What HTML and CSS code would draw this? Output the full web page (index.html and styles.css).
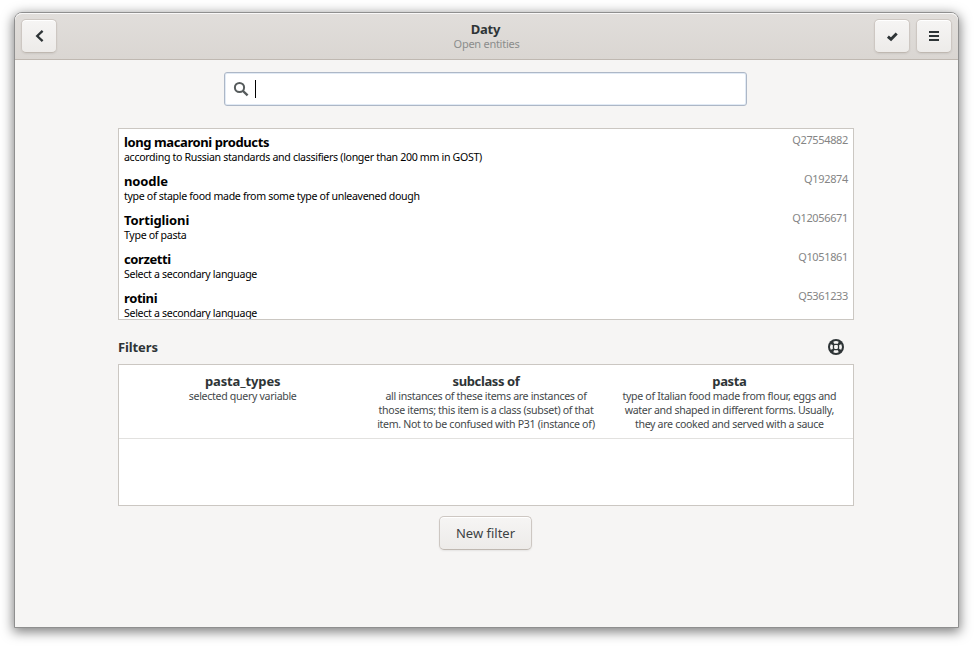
FILE: index.html
```html
<!DOCTYPE html>
<html lang="en">
<head>
<meta charset="utf-8">
<title>Daty</title>
<link rel="stylesheet" href="styles.css">
</head>
<body>
<div class="window">
  <header class="headerbar">
    <button class="button icon-button" aria-label="Back">
      <svg width="16" height="16" viewBox="0 0 16 16"><path d="M11.6 2.8 6.2 8l5.4 5.2" fill="none" stroke="currentColor" stroke-width="2.3"/></svg>
    </button>
    <div class="titles">
      <h1 class="title">Daty</h1>
      <p class="subtitle">Open entities</p>
    </div>
    <div class="actions">
      <button class="button icon-button" aria-label="Confirm">
        <svg width="16" height="16" viewBox="0 0 16 16"><path d="M3.9 8.6 7 11.3 12.7 5.4" fill="none" stroke="currentColor" stroke-width="2.9"/></svg>
      </button>
      <button class="button icon-button" aria-label="Menu">
        <svg width="16" height="16" viewBox="0 0 16 16"><path d="M3 3h10v2H3zM3 7h10v2H3zM3 11h10v2H3z" fill="currentColor"/></svg>
      </button>
    </div>
  </header>
  <main class="content">
    <div class="search">
      <svg class="search-icon" width="16" height="16" viewBox="0 0 16 16"><circle cx="6.5" cy="6.5" r="4.6" fill="none" stroke="currentColor" stroke-width="2"/><path d="m10 10 4.6 4.4" stroke="currentColor" stroke-width="2.4"/></svg>
      <span class="caret"></span>
    </div>
    <ul class="results">
      <li class="result"><div><h2 class="name tight">long macaroni products</h2><p class="description">according to Russian standards and classifiers (longer than 200 mm in GOST)</p></div><span class="entity-id">Q27554882</span></li>
      <li class="result"><div><h2 class="name">noodle</h2><p class="description">type of staple food made from some type of unleavened dough</p></div><span class="entity-id">Q192874</span></li>
      <li class="result"><div><h2 class="name">Tortiglioni</h2><p class="description">Type of pasta</p></div><span class="entity-id">Q12056671</span></li>
      <li class="result"><div><h2 class="name tight">corzetti</h2><p class="description">Select a secondary language</p></div><span class="entity-id">Q1051861</span></li>
      <li class="result"><div><h2 class="name tight">rotini</h2><p class="description">Select a secondary language</p></div><span class="entity-id">Q5361233</span></li>
    </ul>
    <div class="filters-heading">
      <h2 class="name">Filters</h2>
      <svg width="16" height="16" viewBox="0 0 16 16"><circle cx="8" cy="8" r="8" fill="currentColor"/><g class="buoy-gaps"><rect x="6.1" y="6.1" width="3.8" height="3.8" rx="0.8"/><path d="M5.3 2.7Q8 1.3 10.7 2.7L9.9 4.8H6.1zM5.3 13.3Q8 14.7 10.7 13.3L9.9 11.2H6.1zM2.7 5.3Q1.3 8 2.7 10.7L4.8 9.9V6.1zM13.3 5.3Q14.7 8 13.3 10.7L11.2 9.9V6.1z"/></g></svg>
    </div>
    <div class="filters">
      <div class="filter">
        <div class="term"><h3 class="name">pasta_types</h3><p class="description">selected query variable</p></div>
        <div class="term"><h3 class="name tight">subclass of</h3><p class="description">all instances of these items are instances of<br>those items; this item is a class (subset) of that<br>item. Not to be confused with P31 (instance of)</p></div>
        <div class="term"><h3 class="name tight">pasta</h3><p class="description">type of Italian food made from flour, eggs and<br>water and shaped in different forms. Usually,<br>they are cooked and served with a sauce</p></div>
      </div>
    </div>
    <button class="button new-filter">New filter</button>
  </main>
</div>
</body>
</html>
```
FILE: styles.css
```css
* { box-sizing: border-box; }

body {
  margin: 0;
  height: 649px;
  padding: 12px 15px 21px 14px;
  overflow: hidden;
  background: #fff;
  color: #2e3436;
  font-family: "Noto Sans", "Open Sans", sans-serif;
  font-size: 13px;
}

h1, h2, h3, p, ul { margin: 0; padding: 0; }

svg { display: block; flex: none; }

.window {
  display: flex;
  flex-direction: column;
  height: 616px;
  border: 1px solid #8f8f8f;
  border-radius: 8px 8px 0 0;
  background: #f6f5f4;
  box-shadow: 0 3px 12px 1px rgba(0, 0, 0, 0.5);
}

.headerbar {
  display: grid;
  grid-template-columns: 1fr auto 1fr;
  height: 47px;
  padding: 6px 6px 0 6px;
  border-bottom: 1px solid #bfb8b1;
  border-radius: 7px 7px 0 0;
  background: linear-gradient(to top, #dad6d2, #e1dedb);
  box-shadow: inset 0 1px #f9f8f8;
}

.button {
  display: flex;
  align-items: center;
  justify-content: center;
  height: 34px;
  padding: 0;
  border: 1px solid #cdc7c2;
  border-bottom-color: #bfb8b1;
  border-radius: 5px;
  background: linear-gradient(to top, #edebe9, #f6f5f4);
  box-shadow: inset 0 1px #fff, 0 1px 2px rgba(0, 0, 0, 0.07);
  color: #2e3436;
  font: inherit;
}

.icon-button { width: 36px; }

.titles { text-align: center; }

.title {
  margin: 2px 2px 0 0;
  font-size: 13px;
  letter-spacing: -0.2px;
  line-height: 16px;
}

.subtitle {
  color: #8b8d8c;
  font-size: 11px;
  letter-spacing: -0.27px;
  line-height: 14px;
}

.actions {
  display: flex;
  justify-content: flex-end;
  gap: 6px;
}

.content {
  display: flex;
  flex-direction: column;
  width: 736px;
  margin: 0 auto 0 103px;
}

.search {
  display: flex;
  align-items: center;
  align-self: center;
  width: 523px;
  height: 34px;
  margin-top: 12px;
  margin-right: 1px;
  padding-left: 8px;
  border: 1px solid #adb7c6;
  border-radius: 3px;
  background: #fff;
  box-shadow: inset 0 0 0 1px #e1eaf5;
}

.search-icon { color: #565b5c; }

.caret {
  width: 1px;
  height: 18px;
  margin-left: 6px;
  background: #000;
}

.results {
  height: 192px;
  margin-top: 22px;
  border: 1px solid #cbc7c2;
  overflow: hidden;
  background: #fff;
  list-style: none;
  color: #000;
}

.result {
  display: flex;
  justify-content: space-between;
  height: 39px;
  padding: 5px;
}

.name {
  font-size: 13px;
  font-weight: 700;
  letter-spacing: -0.12px;
  line-height: 17px;
}

.name.tight { letter-spacing: -0.4px; }

.description {
  margin-top: -1px;
  font-size: 10.6px;
  letter-spacing: -0.32px;
  line-height: 14px;
  white-space: nowrap;
}

.entity-id {
  margin-top: -1px;
  color: #858585;
  font-size: 11px;
  letter-spacing: -0.35px;
  line-height: 14px;
}

.filters-heading {
  display: flex;
  align-items: center;
  justify-content: space-between;
  height: 44px;
  padding: 10px 10px 0 0;
}

.buoy-gaps { fill: #f6f5f4; }

.filters {
  height: 142px;
  border: 1px solid #cbc7c2;
  background: #fff;
}

.filter {
  display: grid;
  grid-template-columns: repeat(3, 1fr);
  height: 74px;
  padding: 8px 2px 0;
  border-bottom: 1px solid #e2e1df;
  text-align: center;
}

.filter .description { color: #43484a; }

.new-filter {
  align-self: center;
  width: 93px;
  margin-top: 10px;
  margin-right: 1px;
  color: #3c4244;
}
```
